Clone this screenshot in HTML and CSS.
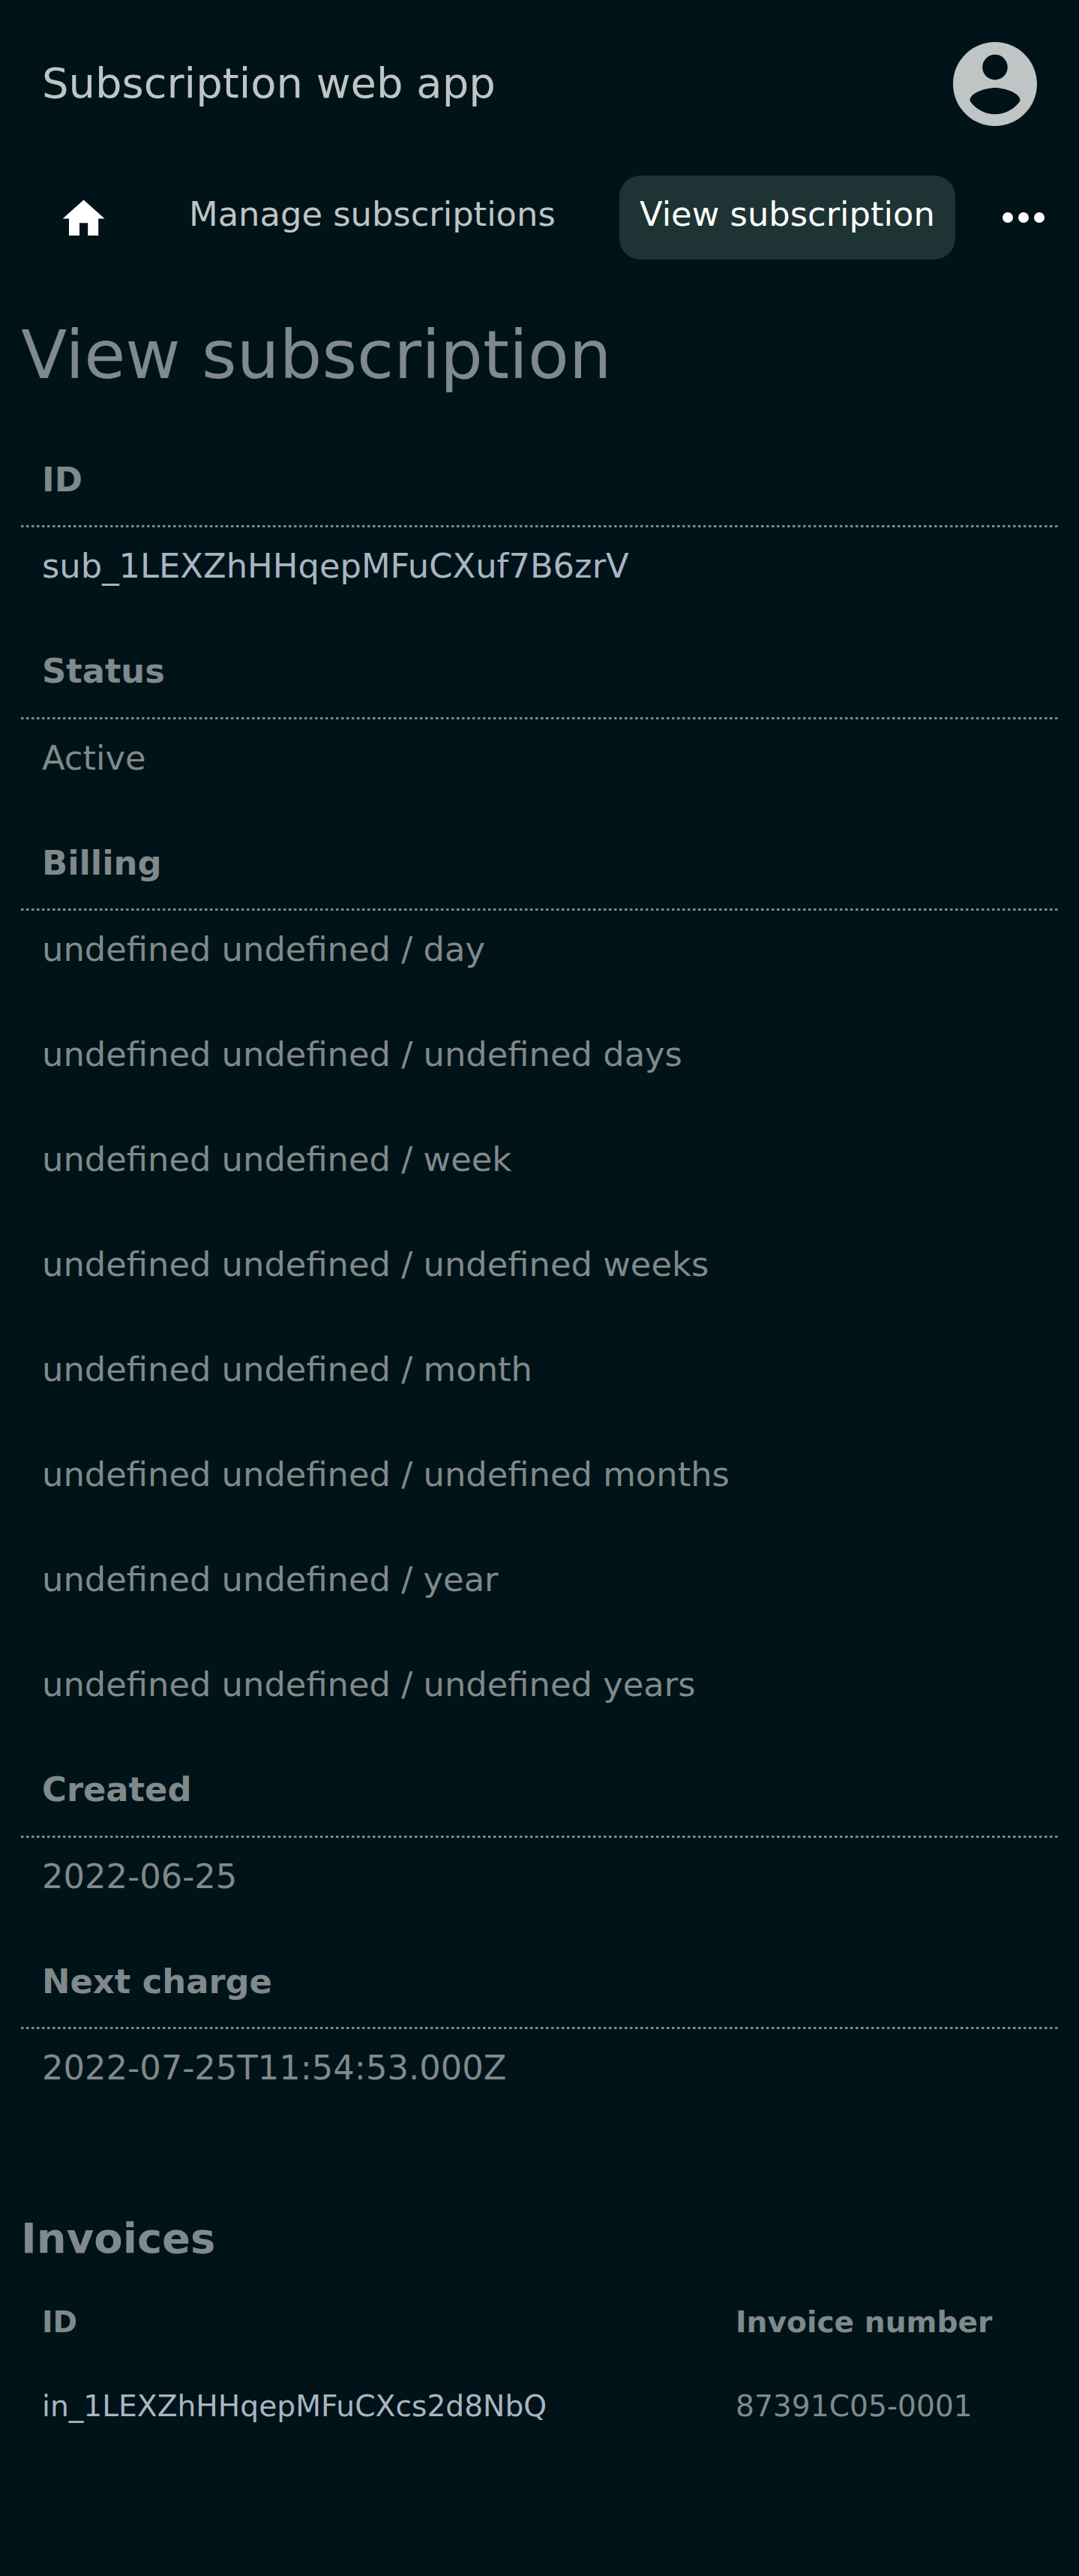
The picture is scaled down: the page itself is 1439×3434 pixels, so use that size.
FILE: index.html
```html
<!DOCTYPE html>
<html lang="en">
<head>
<meta charset="utf-8">
<title>Subscription web app</title>
<link rel="stylesheet" href="styles.css">
</head>
<body>
<header class="topbar">
  <span class="brand">Subscription web app</span>
  <svg class="avatar" viewBox="2 2 20 20"><path d="M12 2C6.48 2 2 6.48 2 12s4.48 10 10 10 10-4.48 10-10S17.52 2 12 2zm0 3c1.66 0 3 1.34 3 3s-1.34 3-3 3-3-1.34-3-3 1.34-3 3-3zm0 14.2c-2.5 0-4.71-1.28-6-3.22.03-1.99 4-3.08 6-3.08 1.99 0 5.97 1.09 6 3.08-1.29 1.94-3.5 3.22-6 3.22z"/></svg>
</header>
<nav class="nav">
  <a class="nav-home"><svg class="icon-home" viewBox="0 0 24 24"><path d="M10 20v-6h4v6h5v-8h3L12 3 2 12h3v8z"/></svg></a>
  <a class="nav-link">Manage subscriptions</a>
  <a class="nav-link active">View subscription</a>
  <a class="nav-more"><svg class="icon-more" viewBox="0 0 24 24"><circle cx="6" cy="12" r="2"/><circle cx="12" cy="12" r="2"/><circle cx="18" cy="12" r="2"/></svg></a>
</nav>
<main class="content">
  <h1 class="title">View subscription</h1>
  <dl class="details">
    <dt>ID</dt>
    <dd><a class="link">sub_1LEXZhHHqepMFuCXuf7B6zrV</a></dd>
    <dt>Status</dt>
    <dd>Active</dd>
    <dt>Billing</dt>
    <dd>undefined undefined / day</dd>
    <dd>undefined undefined / undefined days</dd>
    <dd>undefined undefined / week</dd>
    <dd>undefined undefined / undefined weeks</dd>
    <dd>undefined undefined / month</dd>
    <dd>undefined undefined / undefined months</dd>
    <dd>undefined undefined / year</dd>
    <dd>undefined undefined / undefined years</dd>
    <dt>Created</dt>
    <dd>2022-06-25</dd>
    <dt>Next charge</dt>
    <dd>2022-07-25T11:54:53.000Z</dd>
  </dl>
  <h2 class="subtitle">Invoices</h2>
  <div class="invoices">
    <strong>ID</strong><strong>Invoice number</strong>
    <a class="link">in_1LEXZhHHqepMFuCXcs2d8NbQ</a><span>87391C05-0001</span>
  </div>
</main>
</body>
</html>
```
FILE: styles.css
```css
* { box-sizing: border-box; }
html { background: #001318; }
body {
  margin: 0;
  min-height: 3434px;
  background: #001318;
  color: #80898b;
  font-family: "DejaVu Sans", sans-serif;
  font-size: 44.8px;
}
.topbar {
  display: flex;
  justify-content: space-between;
  align-items: center;
  height: 224px;
  padding: 0 56px;
  color: #bfc4c5;
}
.brand { font-size: 56px; line-height: 65px; padding-bottom: 4px; }
.avatar { width: 112px; height: 112px; fill: #bfc4c5; }
.nav {
  display: flex;
  height: 132.5px;
  padding-top: 10px;
}
.nav-home { width: 224px; padding: 24px 0 0 78.4px; }
.nav-link {
  height: 112px;
  padding: 18px 28px 0;
  border-radius: 28px;
  line-height: 67px;
  color: #bfc4c5;
  white-space: nowrap;
}
.nav-link.active {
  width: 448px;
  margin-left: auto;
  padding: 18px 27px 0;
  background: #1e3333;
  color: #fff;
}
.nav-more { width: 165px; padding: 14px 0 0 49px; }
.icon-home { display: block; width: 67.2px; height: 67.2px; fill: #fff; }
.icon-more { display: block; width: 84px; height: 84px; fill: #fff; }
.content { padding: 0 28px; }
.title {
  margin: 0;
  height: 231px;
  padding-top: 64px;
  font-size: 89.6px;
  font-weight: 400;
  line-height: 104px;
}
.details { margin: 0; line-height: 67px; }
.details dt {
  height: 115.5px;
  padding: 18px 28px 0;
  font-weight: 700;
  background: repeating-linear-gradient(90deg, #80898b 0 3px, #404e52 3px 4px, transparent 4px 7px) left bottom / 100% 3px no-repeat;
}
.details dd { margin: 0; height: 140px; padding: 18px 28px 0; }
.link { color: #aab5c3; }
.subtitle {
  margin: 0;
  padding-top: 105.5px;
  font-size: 56px;
  line-height: 65px;
}
.invoices {
  display: grid;
  grid-template-columns: 925px 1fr;
  grid-auto-rows: 112px;
  align-items: center;
  padding: 23.5px 28px 0;
  font-size: 39.2px;
}
```
